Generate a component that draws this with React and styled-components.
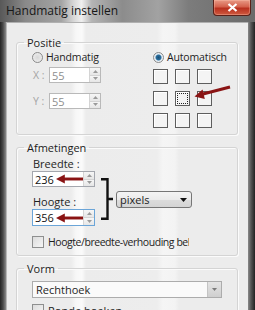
import styled, { createGlobalStyle } from 'styled-components';

const GlobalStyle = createGlobalStyle`
  html, body {
    margin: 0;
    padding: 0;
    background: #ffffff;
  }
  body {
    font-family: "Open Sans", "Noto Sans", sans-serif;
    font-size: 11px;
    color: #1e1e1e;
  }
`;

const RED = '#8a1414';

const Arrow = ({ width = 28 }) => (
  <svg width={width} height="10" viewBox={`0 0 ${width} 10`}>
    <line x1="8" y1="5" x2={width} y2="5" stroke={RED} strokeWidth="3" />
    <polygon points="0,5 9,0.5 9,9.5" fill={RED} />
  </svg>
);

const Spinner = () => (
  <Spin>
    <SpinHalf>
      <svg width="5" height="3" viewBox="0 0 5 3">
        <polygon points="2.5,0 5,3 0,3" fill="#9a9a9a" />
      </svg>
    </SpinHalf>
    <SpinHalf>
      <svg width="5" height="3" viewBox="0 0 5 3">
        <polygon points="0,0 5,0 2.5,3" fill="#9a9a9a" />
      </svg>
    </SpinHalf>
  </Spin>
);

const cells = [0, 1, 2, 3, 4, 5, 6, 7, 8];

const App = () => {
  return (
    <>
      <GlobalStyle />
      <Window>
        <TitleBar>
          <Title>Handmatig instellen</Title>
          <CloseButton>
            <svg width="11" height="9" viewBox="0 0 11 9">
              <path d="M1.5 1 L9.5 8 M9.5 1 L1.5 8" stroke="#ffffff" strokeWidth="2.2" />
            </svg>
          </CloseButton>
        </TitleBar>
        <Body>
          <Group>
            <Legend>Positie</Legend>
            <PositionGrid>
              <Column>
                <OptionRow>
                  <Radio />
                  <span>Handmatig</span>
                </OptionRow>
                <CoordRow>
                  <CoordLabel>X :</CoordLabel>
                  <SpinBox $width={52} $disabled>
                    <Value $disabled>55</Value>
                    <Spinner />
                  </SpinBox>
                </CoordRow>
                <CoordRow $gap={10}>
                  <CoordLabel>Y :</CoordLabel>
                  <SpinBox $width={52} $disabled>
                    <Value $disabled>55</Value>
                    <Spinner />
                  </SpinBox>
                </CoordRow>
              </Column>
              <Column>
                <OptionRow>
                  <Radio $checked />
                  <span>Automatisch</span>
                </OptionRow>
                <AnchorGrid>
                  {cells.map((i) => (
                    <Cell key={i}>{i === 4 && <FocusMark />}</Cell>
                  ))}
                  <GridArrow width="38" height="20" viewBox="0 0 38 20">
                    <line x1="10" y1="12" x2="37" y2="5" stroke={RED} strokeWidth="3" />
                    <polygon points="1.5,14.5 11.8,17 9.6,7.4" fill={RED} />
                  </GridArrow>
                </AnchorGrid>
              </Column>
            </PositionGrid>
          </Group>

          <Group $top={5}>
            <Legend>Afmetingen</Legend>
            <SizeGrid>
              <FieldLabel $row={1}>Breedte :</FieldLabel>
              <SpinBox $width={63} $row={2}>
                <Value>236</Value>
                <Arrow />
                <Spinner />
              </SpinBox>
              <FieldLabel $row={4}>Hoogte :</FieldLabel>
              <SpinBox $width={63} $row={5} $focused>
                <Value>356</Value>
                <Arrow />
                <Spinner />
              </SpinBox>
              <Bracket width="13" height="42" viewBox="0 0 13 42">
                <path d="M0 1.2 H6.5 V40.8 H0 M6.5 21 H12" stroke="#111111" strokeWidth="2.4" fill="none" />
              </Bracket>
              <UnitSelect>
                <span>pixels</span>
                <svg width="7" height="4" viewBox="0 0 7 4">
                  <polygon points="0,0 7,0 3.5,4" fill="#111111" />
                </svg>
              </UnitSelect>
            </SizeGrid>
            <CheckRow $top={9}>
              <Check />
              <Clip>Hoogte/breedte-verhouding behouden</Clip>
            </CheckRow>
          </Group>

          <Group $top={5}>
            <Legend>Vorm</Legend>
            <ShapeSelect>
              <span>Rechthoek</span>
              <ShapeButton>
                <svg width="5" height="3" viewBox="0 0 5 3">
                  <polygon points="0,0 5,0 2.5,3" fill="#7a7a7a" />
                </svg>
              </ShapeButton>
            </ShapeSelect>
            <CheckRow $top={5}>
              <Check />
              <span>Ronde hoeken</span>
            </CheckRow>
          </Group>
        </Body>
      </Window>
    </>
  );
};

const Window = styled.div`
  width: 255px;
  height: 310px;
  overflow: hidden;
  display: flex;
  flex-direction: column;
  background: linear-gradient(
    90deg,
    #242424 0px,
    #4a4a4a 3px,
    #8a8a8a 6px,
    #8a8a8a 248px,
    #555555 251px,
    #222222 255px
  );
`;

const TitleBar = styled.div`
  height: 22px;
  flex: none;
  display: flex;
  align-items: flex-start;
  justify-content: space-between;
  padding: 0 4px 0 6px;
  box-sizing: border-box;
  background: linear-gradient(
    90deg,
    #585858 0%,
    #8a8a8a 10%,
    #a4a4a4 24%,
    #d8d8d8 29%,
    #efefef 32%,
    #b4b4b4 36%,
    #8c8c8c 48%,
    #a2a2a2 62%,
    #7c7c7c 74%,
    #6a6a6a 100%
  );
`;

const Title = styled.div`
  font-size: 12px;
  line-height: 22px;
  color: #161616;
`;

const CloseButton = styled.div`
  width: 38px;
  height: 16px;
  display: flex;
  align-items: center;
  justify-content: center;
  box-sizing: border-box;
  border: 1px solid #5a2018;
  border-top: none;
  border-radius: 0 0 4px 4px;
  background: linear-gradient(180deg, #e89a86 0%, #d4614c 45%, #b8301e 55%, #cf5a40 100%);
  box-shadow: inset 0 0 0 1px rgba(255, 200, 180, 0.35);
`;

const Body = styled.div`
  flex: 1;
  margin: 0 7px 0 6px;
  padding: 12px 10px 0 9px;
  border-top: 1px solid #b0b0b0;
  border-left: 1px solid #b8b8b8;
  background: linear-gradient(
    90deg,
    #ececec 0px,
    #ececec 64px,
    #f7f7f7 69px,
    #fafafa 75px,
    #ececec 79px,
    #ededed 150px,
    #f5f5f5 156px,
    #f3f3f3 168px,
    #ececec 172px
  );
`;

const Group = styled.fieldset`
  margin: ${(p) => p.$top || 0}px 0 0 0;
  padding: 0 6px 6px 15px;
  border: 1px solid #d4d4d4;
  border-radius: 3px;
  box-shadow: inset 1px 1px 0 #fbfbfb, 1px 1px 0 #fbfbfb;
  min-width: 0;
`;

const Legend = styled.legend`
  margin-left: -8px;
  padding: 0 3px;
  font-size: 11px;
  line-height: 15px;
  color: #1c1c1c;
`;

const PositionGrid = styled.div`
  display: grid;
  grid-template-columns: 121px auto;
`;

const Column = styled.div`
  display: flex;
  flex-direction: column;
`;

const OptionRow = styled.div`
  display: flex;
  align-items: center;
  gap: 3px;
  height: 14px;
  font-size: 10.5px;
  letter-spacing: -0.15px;
`;

const Radio = styled.span`
  width: 9px;
  height: 9px;
  border-radius: 50%;
  border: 1px solid #8a8a8a;
  background: ${(p) =>
    p.$checked
      ? 'radial-gradient(circle, #1c4f74 0, #2a6fa0 2.5px, #e6eef4 3.5px, #f4f4f4 100%)'
      : 'radial-gradient(circle, #d8d8d8 0, #f2f2f2 100%)'};
  flex: none;
`;

const CoordRow = styled.div`
  display: flex;
  align-items: center;
  margin-top: ${(p) => p.$gap || 3}px;
`;

const CoordLabel = styled.span`
  width: 16px;
  color: #a4a4a4;
  font-size: 10.5px;
  padding-left: 1px;
`;

const SpinBox = styled.div`
  grid-column: 1;
  grid-row: ${(p) => p.$row || 'auto'};
  width: ${(p) => p.$width}px;
  height: ${(p) => (p.$focused ? 17 : 16)}px;
  box-sizing: border-box;
  display: flex;
  align-items: center;
  border: 1px solid ${(p) => (p.$focused ? '#6ba5d8' : p.$disabled ? '#b9b9b9' : '#a4a7ae')};
  background: #ffffff;
  padding-left: 2px;
`;

const Value = styled.span`
  font-size: 11px;
  color: ${(p) => (p.$disabled ? '#8e8e8e' : '#111111')};
  margin-right: 2px;
`;

const Spin = styled.div`
  margin-left: auto;
  width: 10px;
  align-self: stretch;
  display: flex;
  flex-direction: column;
  border-left: 1px solid #d4d4d4;
`;

const SpinHalf = styled.div`
  flex: 1;
  display: flex;
  align-items: center;
  justify-content: center;
  background: linear-gradient(180deg, #f6f6f6, #e6e6e6);
  & + & {
    border-top: 1px solid #d4d4d4;
  }
`;

const AnchorGrid = styled.div`
  position: relative;
  margin-top: 5px;
  display: grid;
  grid-template-columns: repeat(3, 15px);
  grid-auto-rows: 15px;
  gap: 7px;
`;

const Cell = styled.div`
  box-sizing: border-box;
  border: 1px solid #5e5e5e;
  background: #f4f4f4;
  box-shadow: inset 1px 1px 0 #ffffff;
  display: flex;
  align-items: center;
  justify-content: center;
`;

const FocusMark = styled.div`
  width: 9px;
  height: 9px;
  border: 1px dotted #222222;
`;

const GridArrow = styled.svg`
  position: absolute;
  left: 40px;
  top: 13px;
`;

const SizeGrid = styled.div`
  margin-top: 2px;
  display: grid;
  grid-template-columns: 63px 21px 76px;
  grid-template-rows: 14px 16px 8px 14px 17px;
`;

const FieldLabel = styled.div`
  grid-column: 1;
  grid-row: ${(p) => p.$row};
  font-size: 11px;
  line-height: 14px;
  padding-left: 1px;
`;

const Bracket = styled.svg`
  grid-column: 2;
  grid-row: 2 / 6;
  align-self: center;
  margin-left: 6px;
`;

const UnitSelect = styled.div`
  grid-column: 3;
  grid-row: 2 / 6;
  align-self: center;
  height: 17px;
  margin-top: 2px;
  box-sizing: border-box;
  display: flex;
  align-items: center;
  justify-content: space-between;
  padding: 0 4px 0 3px;
  border: 1px solid #767676;
  border-radius: 3px;
  background: linear-gradient(180deg, #f4f4f4 0%, #ebebeb 50%, #dcdcdc 51%, #d4d4d4 100%);
  font-size: 11px;
`;

const CheckRow = styled.div`
  margin-top: ${(p) => p.$top}px;
  display: flex;
  align-items: center;
  gap: 4px;
  height: 14px;
  font-size: 11px;
`;

const Check = styled.span`
  flex: none;
  width: 10px;
  height: 10px;
  border: 1px solid #8e8f8f;
  background: linear-gradient(135deg, #dcdcdc, #f6f6f6);
`;

const Clip = styled.span`
  width: 141px;
  overflow: hidden;
  white-space: nowrap;
  font-size: 10.5px;
  letter-spacing: -0.45px;
`;

const ShapeSelect = styled.div`
  margin-top: 5px;
  width: 190px;
  height: 17px;
  box-sizing: border-box;
  display: flex;
  align-items: center;
  justify-content: space-between;
  padding-left: 3px;
  border: 1px solid #acacac;
  background: #fafafa;
  font-size: 11px;
`;

const ShapeButton = styled.div`
  width: 13px;
  align-self: stretch;
  display: flex;
  align-items: center;
  justify-content: center;
  border-left: 1px solid #c4c4c4;
  background: linear-gradient(180deg, #e4e4e4, #cfcfcf);
`;

export default App;
